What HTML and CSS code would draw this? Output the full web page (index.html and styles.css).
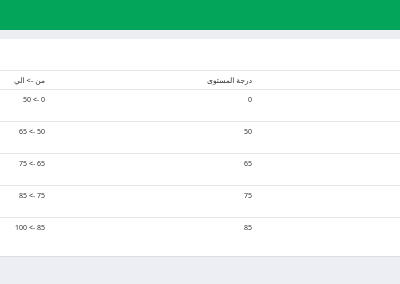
FILE: index.html
```html
<!DOCTYPE html>
<html lang="ar" dir="rtl">
<head>
<meta charset="utf-8">
<title>مستويات الدرجات</title>
<link rel="stylesheet" href="styles.css">
</head>
<body>
  <header class="topbar"></header>
  <main class="page">
    <section class="card">
      <table class="levels">
        <colgroup>
          <col class="col-spacer">
          <col class="col-level">
          <col class="col-range">
        </colgroup>
        <thead>
          <tr>
            <th></th>
            <th>درجة المستوى</th>
            <th>من -> الي</th>
          </tr>
        </thead>
        <tbody>
          <tr><td></td><td>0</td><td>0 -> 50</td></tr>
          <tr><td></td><td>50</td><td>50 -> 65</td></tr>
          <tr><td></td><td>65</td><td>65 -> 75</td></tr>
          <tr><td></td><td>75</td><td>75 -> 85</td></tr>
          <tr><td></td><td>85</td><td>85 -> 100</td></tr>
        </tbody>
      </table>
    </section>
  </main>
</body>
</html>
```
FILE: styles.css
```css
html, body {
  margin: 0;
  padding: 0;
}

body {
  background: #eceef3;
  font-family: "Noto Sans", "DejaVu Sans", sans-serif;
  color: #333;
  height: 284px;
  overflow: hidden;
}

.topbar {
  height: 30px;
  background: #02a55a;
}

.page {
  padding-top: 9px;
}

.card {
  background: #fff;
  padding: 31px 0 6px;
  border-bottom: 1px solid #d9dce2;
  will-change: transform;
}

.levels {
  width: 100%;
  border-collapse: collapse;
  table-layout: fixed;
  font-size: 7px;
  color: #333;
}

.col-spacer { width: 142px; }
.col-level { width: 207px; }
.col-range { width: 51px; }

.levels th,
.levels td {
  text-align: right;
  vertical-align: top;
  padding: 0 6px;
  font-weight: normal;
  border-top: 1px solid #e6e6e6;
}

.levels thead th {
  height: 18px;
  line-height: 18px;
  font-size: 7.5px;
  border-bottom: 1px solid #e6e6e6;
}

.levels tbody td {
  height: 32px;
  padding-top: 5px;
  box-sizing: border-box;
  line-height: 10px;
}
```
